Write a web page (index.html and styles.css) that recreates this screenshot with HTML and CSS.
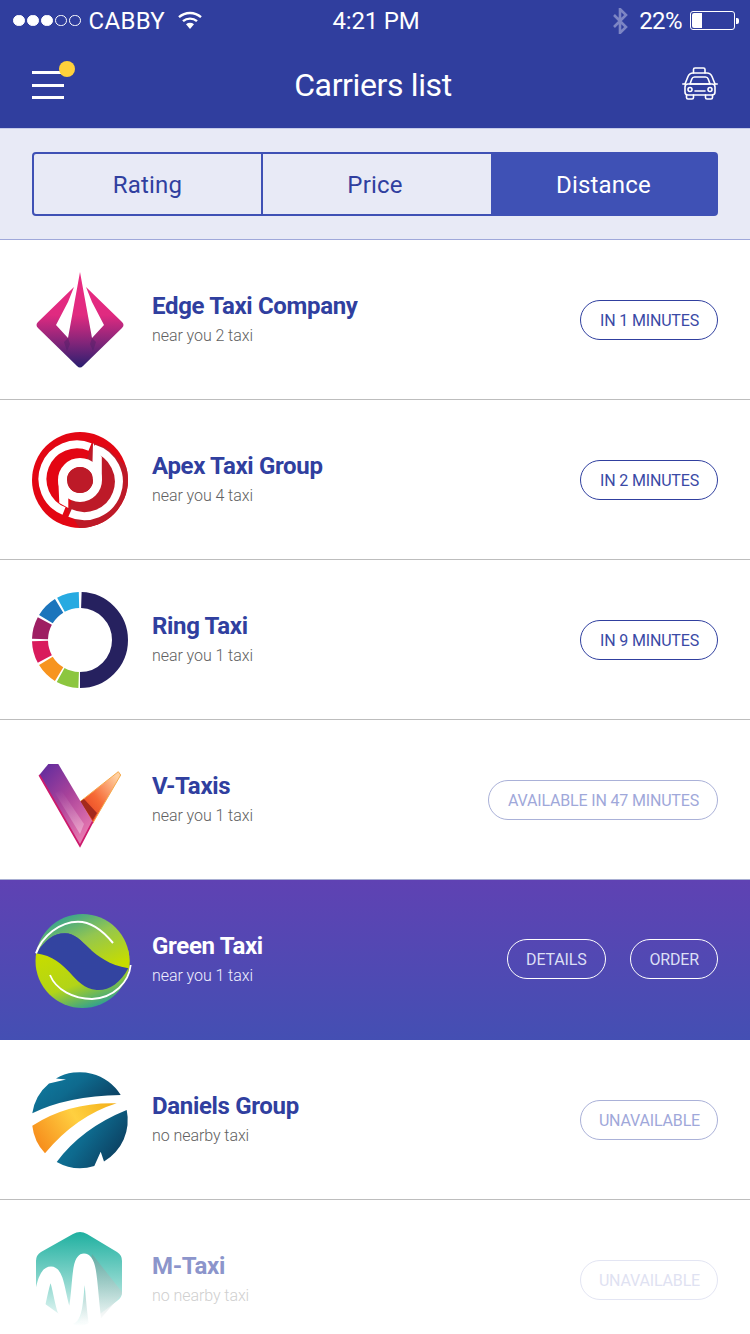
FILE: index.html
```html
<!DOCTYPE html>
<html lang="en">
<head>
<meta charset="utf-8">
<title>Carriers list</title>
<link rel="stylesheet" href="styles.css">
</head>
<body>
<div class="screen">
  <header class="header">
    <div class="status">
      <div class="status-left">
        <div class="dots"><i class="dot on"></i><i class="dot on"></i><i class="dot on"></i><i class="dot"></i><i class="dot"></i></div>
        <span class="carrier">CABBY</span>
        <svg class="wifi" viewBox="0 0 24 18" width="24" height="18"><g fill="none" stroke="#fff" stroke-width="2.4"><path d="M1 6.2C7.2.6 16.8.6 23 6.2"/><path d="M5 10.2c4-3.5 10-3.5 14 0"/></g><path d="M8 13.2c2.400-1.800 5.600-1.800 8 0L12 18z" fill="#fff"/></svg>
      </div>
      <span class="time">4:21 PM</span>
      <div class="status-right">
        <svg class="bt" viewBox="0 0 16 26" width="16" height="26"><path d="M2 7l12 12-6 6V1l6 6L2 19" fill="none" stroke="#7d86c4" stroke-width="2.600"/></svg>
        <span class="pct">22%</span>
        <div class="battery"><div class="battery-level"></div></div>
        <div class="battery-tip"></div>
      </div>
    </div>
    <div class="nav">
      <button class="menu" aria-label="Menu"><i></i><i></i><i></i><b class="badge"></b></button>
      <h1 class="title">Carriers list</h1>
      <svg class="taxi" viewBox="0 0 36 33" width="36" height="33"><g fill="none" stroke="#fff" stroke-width="1.600" stroke-linejoin="round" stroke-linecap="round"><path d="M11.500 6V2.500q0-1.500 1.500-1.500h8.500q1.500 0 1.500 1.500V6"/><path d="M3 17l3-7.500Q7.500 6 11 6h14q3.500 0 5 3.500l3 7.500"/><path d="M8 17l1.800-5q.7-2 2.700-2h11q2 0 2.700 2l1.800 5z"/><rect x="3" y="17" width="30" height="11" rx="3"/><circle cx="8" cy="22.500" r="2"/><circle cx="28" cy="22.500" r="2"/><path d="M13 24h10"/><path d="M.8 17H3M33 17h2.200"/><path d="M4.500 28v2.500q0 1.500 1.500 1.500h4q1.500 0 1.500-1.500V28M23.500 28v2.500q0 1.500 1.500 1.500h4q1.500 0 1.500-1.500V28"/></g></svg>
    </div>
  </header>

  <section class="tabs-bar">
    <div class="tabs">
      <div class="tab">Rating</div>
      <div class="tab tab-mid">Price</div>
      <div class="tab active">Distance</div>
    </div>
  </section>

  <main class="list">
    <article class="row">
      <svg class="logo" viewBox="0 0 96 96" width="96" height="96">
        <defs><linearGradient id="g1" x1="0" y1="0" x2="0" y2="1"><stop offset="0" stop-color="#ea2a80"/><stop offset=".45" stop-color="#e02a80"/><stop offset=".75" stop-color="#7f2579"/><stop offset="1" stop-color="#2a1f70"/></linearGradient></defs>
        <path d="M48 0 36 66 24 53 36 30 42 15 6 50Q3 53 6 56L45 94Q48 97 51 94L90 56Q93 53 90 50L54 15 60 30 72 53 60 66z" fill="url(#g1)"/>
        <path d="M32 70 36 66 38 72 35 79zM64 70 60 66 58 72 61 79z" fill="#4d1f66" opacity=".45"/>
      </svg>
      <div class="info"><h2 class="name">Edge Taxi Company</h2><p class="sub">near you 2 taxi</p></div>
      <div class="actions"><span class="pill">IN 1 MINUTES</span></div>
    </article>

    <article class="row">
      <svg class="logo" viewBox="0 0 96 96" width="96" height="96">
        <defs><clipPath id="c2"><circle cx="48" cy="48" r="48"/></clipPath></defs>
        <circle cx="48" cy="48" r="48" fill="#e30613"/>
        <path d="M61 11 75 16 100 40V100H50L36 78z" fill="#bd1a28" clip-path="url(#c2)"/>
        <g fill="none" stroke="#fff" stroke-width="8">
          <path d="M58 15A34.500 34.500 0 0 0 32 79"/>
          <path d="M62 16.500A34.500 34.500 0 1 1 38 81"/>
          <circle cx="48" cy="48" r="17.500" stroke-width="9"/>
        </g>
        <path d="M61 11 69.800 25V48H60zM26.300 48H36.300V76L27.300 71z" fill="#fff"/>
        <circle cx="48" cy="48" r="13" fill="#bd1a28"/>
      </svg>
      <div class="info"><h2 class="name">Apex Taxi Group</h2><p class="sub">near you 4 taxi</p></div>
      <div class="actions"><span class="pill">IN 2 MINUTES</span></div>
    </article>

    <article class="row">
      <svg class="logo" viewBox="0 0 96 96" width="96" height="96">
        <g fill="none" stroke-width="16">
          <circle cx="48" cy="48" r="40" pathLength="360" stroke="#26215f" stroke-dasharray="178 182" stroke-dashoffset="-272"/>
          <circle cx="48" cy="48" r="40" pathLength="360" stroke="#8cc63f" stroke-dasharray="27 333" stroke-dashoffset="-92"/>
          <circle cx="48" cy="48" r="40" pathLength="360" stroke="#f7941e" stroke-dasharray="27 333" stroke-dashoffset="-121.500"/>
          <circle cx="48" cy="48" r="40" pathLength="360" stroke="#d91b5c" stroke-dasharray="27 333" stroke-dashoffset="-151.500"/>
          <circle cx="48" cy="48" r="40" pathLength="360" stroke="#9e1f63" stroke-dasharray="27 333" stroke-dashoffset="-181.500"/>
          <circle cx="48" cy="48" r="40" pathLength="360" stroke="#1c75bc" stroke-dasharray="27 333" stroke-dashoffset="-211.500"/>
          <circle cx="48" cy="48" r="40" pathLength="360" stroke="#27aae1" stroke-dasharray="27 333" stroke-dashoffset="-241.500"/>
        </g>
      </svg>
      <div class="info"><h2 class="name">Ring Taxi</h2><p class="sub">near you 1 taxi</p></div>
      <div class="actions"><span class="pill">IN 9 MINUTES</span></div>
    </article>

    <article class="row row-above-selected">
      <svg class="logo" viewBox="0 0 96 96" width="96" height="96">
        <defs>
          <linearGradient id="g4a" x1="0" y1="0" x2=".7" y2="1"><stop offset="0" stop-color="#5b2a9e"/><stop offset=".5" stop-color="#a8429a"/><stop offset="1" stop-color="#e878b0"/></linearGradient>
          <linearGradient id="g4b" x1="0" y1="1" x2="1" y2="0"><stop offset="0" stop-color="#e0301c"/><stop offset=".45" stop-color="#f66a35"/><stop offset=".9" stop-color="#ffcfa0"/></linearGradient>
          <linearGradient id="g4c" x1="0" y1="0" x2="0" y2="1"><stop offset="0" stop-color="#fff" stop-opacity="0"/><stop offset="1" stop-color="#fff" stop-opacity=".35"/></linearGradient>
        </defs>
        <path d="M48 49.700 86.300 19.700 88.700 23 60.700 71.300z" fill="url(#g4b)" stroke="#f5a94a" stroke-width="1"/>
        <path d="M48 49.700 60.700 68 65 61 52 47z" fill="#a32a1c"/>
        <path d="M16.300 12H26.300L60.700 69.700 48 94 7.300 23z" fill="url(#g4a)"/>
        <path d="M23 41 29 38 52 72 48 82z" fill="url(#g4c)"/>
        <path d="M7.300 23 48 94 60.700 69.700" fill="none" stroke="#cc1a6c" stroke-width="1.800"/>
      </svg>
      <div class="info"><h2 class="name">V-Taxis</h2><p class="sub">near you 1 taxi</p></div>
      <div class="actions"><span class="pill pill-muted">AVAILABLE IN 47 MINUTES</span></div>
    </article>

    <article class="row row-selected">
      <svg class="logo" viewBox="0 0 96 96" width="96" height="96">
        <defs>
          <linearGradient id="g5a" x1=".2" y1="0" x2=".9" y2=".9"><stop offset="0" stop-color="#1f9aa0"/><stop offset=".5" stop-color="#93c650"/><stop offset="1" stop-color="#c6dc00"/></linearGradient>
          <linearGradient id="g5b" x1=".1" y1=".1" x2=".6" y2="1"><stop offset="0" stop-color="#c6dc00"/><stop offset=".55" stop-color="#b2d418"/><stop offset="1" stop-color="#1f9aa0"/></linearGradient>
          <clipPath id="c5"><circle cx="50.500" cy="49" r="47"/></clipPath>
        </defs>
        <g clip-path="url(#c5)">
          <rect x="0" y="38" width="100" height="62" fill="url(#g5b)"/>
          <path d="M4 41.300C14 28 21 21.300 33 21.300C52 21.300 58 50 96.300 56.300L100 56V0H0V41z" fill="url(#g5a)"/>
          <path d="M4 41.300C14 28 21 21.300 33 21.300C52 21.300 58 50 96.300 56.300C88 72 76 79 64.700 78C40 76 38 46 4 41.300z" fill="#3344a0"/>
        </g>
        <path d="M4 41.300C10 24 28 9.700 46 9.700C60 9.700 72 20 81 31" fill="none" stroke="#fff" stroke-width="2"/>
        <path d="M98.700 53C97 70 82 86 60 87C42 87 24 78 18 63" fill="none" stroke="#fff" stroke-width="1.800"/>
      </svg>
      <div class="info"><h2 class="name">Green Taxi</h2><p class="sub">near you 1 taxi</p></div>
      <div class="actions actions-lift"><span class="pill pill-light pill-details">DETAILS</span><span class="pill pill-light">ORDER</span></div>
    </article>

    <article class="row">
      <svg class="logo" viewBox="0 0 96 96" width="96" height="96">
        <defs>
          <linearGradient id="g6a" x1="0" y1="0" x2="1" y2=".6"><stop offset="0" stop-color="#0f7fa4"/><stop offset=".5" stop-color="#0e6a8e"/><stop offset="1" stop-color="#0c3f60"/></linearGradient>
          <linearGradient id="g6b" x1="0" y1=".6" x2="1" y2=".2"><stop offset="0" stop-color="#f7901e"/><stop offset=".55" stop-color="#ffd040"/><stop offset="1" stop-color="#f5b31d"/></linearGradient>
        </defs>
        <path d="M.3 41.300A48 48 0 0 1 17 11.500L34 7.500 24 6.500A48 48 0 0 1 88.700 23Q35 24 .3 41.300z" fill="url(#g6a)"/>
        <path d="M.3 53.700Q37 30 84.700 31.300 44 44 13 81.300A48 48 0 0 1 .3 53.700z" fill="url(#g6b)"/>
        <path d="M94.700 38A48 48 0 0 1 72 89.500L68.700 79.700 62.300 94A48 48 0 0 1 24.700 89.900Q50 56 94.700 38z" fill="url(#g6a)"/>
      </svg>
      <div class="info"><h2 class="name">Daniels Group</h2><p class="sub">no nearby taxi</p></div>
      <div class="actions"><span class="pill pill-muted pill-tight">UNAVAILABLE</span></div>
    </article>

    <article class="row row-faded">
      <svg class="logo" viewBox="0 0 96 96" width="96" height="96">
        <defs>
          <linearGradient id="g7" x1="0" y1="0" x2="0" y2="1"><stop offset="0" stop-color="#1fb0a0"/><stop offset=".55" stop-color="#8fd8cf"/><stop offset="1" stop-color="#ffffff"/></linearGradient>
          <linearGradient id="g7s" x1="0" y1="0" x2="0" y2="1"><stop offset="0" stop-color="#6f9a96"/><stop offset="1" stop-color="#ffffff"/></linearGradient>
        </defs>
        <path d="M41 2 9 20Q4 23 4 29V60Q4 66 9 69L41 92Q48 96 55 92L85 69Q90 66 90 60V29Q90 23 85 20L55 2Q48-2 41 2z" fill="url(#g7)"/>
        <path d="M60 22 90 60V62L64 92 48 90z" fill="url(#g7s)" opacity=".6"/>
        <path d="M6 76C10 60 12 41 19 41C28 41 28 86 38 86C48 86 44 28 52 28C60 28 59 70 64 96" fill="none" stroke="#fff" stroke-width="13"/>
      </svg>
      <div class="info"><h2 class="name">M-Taxi</h2><p class="sub">no nearby taxi</p></div>
      <div class="actions"><span class="pill pill-tight">UNAVAILABLE</span></div>
    </article>
  </main>
</div>
</body>
</html>
```

FILE: styles.css
```css
* { box-sizing: border-box; margin: 0; padding: 0; }
html, body { width: 750px; height: 1334px; overflow: hidden; background: #fff; }
body { font-family: Roboto, "Liberation Sans", sans-serif; color: #303f9f; }
.screen { width: 750px; height: 1334px; overflow: hidden; }

.header { height: 128px; background: #303e9e; color: #fff; }
.status { height: 40px; display: grid; grid-template-columns: 1fr auto 1fr; align-items: center; padding: 1px 11px 0 13px; font-size: 24px; line-height: 40px; }
.status-left { display: flex; align-items: center; }
.dots { display: flex; gap: 2.500px; margin: -1px 9px 0 0; }
.dot { width: 11.500px; height: 11.500px; border: 1px solid #fff; border-radius: 50%; }
.dot.on { background: #fff; }
.carrier { letter-spacing: .3px; margin-left: -1px; }
.time { letter-spacing: -.2px; }
.wifi { margin-left: 13px; margin-top: -2px; }
.status-right { display: flex; align-items: center; justify-content: flex-end; }
.bt { margin-right: 11px; }
.pct { margin-right: 8px; letter-spacing: -.6px; }
.battery { width: 45px; height: 19px; margin-top: -1px; border: 1px solid #fff; border-radius: 3px; padding: 1px; }
.battery-level { width: 10px; height: 100%; background: #fff; border-radius: 2px 0 0 2px; }
.battery-tip { width: 3px; height: 6px; margin: -1px 0 0 1px; background: #fff; border-radius: 0 2px 2px 0; }

.nav { height: 88px; display: flex; align-items: center; justify-content: space-between; padding: 0 32px; }
.menu { position: relative; width: 32px; height: 28px; margin-top: 2px; display: flex; flex-direction: column; justify-content: space-between; background: none; border: 0; }
.menu i { display: block; height: 3px; background: #fff; }
.badge { position: absolute; left: 27px; top: -10px; width: 16px; height: 16px; border-radius: 50%; background: #ffd13b; }
.title { margin-top: 2px; font-size: 32px; line-height: 40px; font-weight: 400; letter-spacing: -.37px; color: #fff; }
.taxi { display: block; margin-top: -2px; }

.tabs-bar { height: 112px; background: #e8eaf6; border-top: 1px solid #c5cae9; border-bottom: 1px solid #9fa8da; padding-top: 23px; }
.tabs { width: 686px; height: 64px; margin-left: 32px; display: grid; grid-template-columns: 231px 228px 227px; }
.tab { display: flex; align-items: center; justify-content: center; padding-top: 1px; font-size: 24px; letter-spacing: .2px; color: #303f9f; border: 2px solid #3f51b5; border-left-width: 0; }
.tab:first-child { border-left-width: 2px; border-radius: 4px 0 0 4px; }
.tab-mid { padding-right: 4px; border-right-width: 0; }
.tab.active { background: #3f51b5; color: #fff; border-radius: 0 4px 4px 0; }

.list { display: flex; flex-direction: column; }
.row { height: 160px; flex: none; display: flex; align-items: center; padding: 0 32px; border-bottom: 1px solid #bdbdbd; }
.logo { flex: none; display: block; overflow: visible; }
.info { flex: 1; margin-left: 24px; margin-top: -2px; }
.name { font-size: 24px; line-height: 28px; font-weight: 700; letter-spacing: -.33px; color: #303f9f; }
.sub { margin-top: 6px; font-size: 16px; line-height: 20px; font-weight: 300; letter-spacing: -.07px; color: #616161; }
.actions { display: flex; gap: 24px; }
.actions-lift { margin-top: -2px; }
.pill { height: 40px; padding: 1px 18px 0 19px; display: flex; align-items: center; border: 1px solid #303f9f; border-radius: 20px; font-size: 16px; letter-spacing: -.17px; color: #3a4aa6; }
.pill-muted { border-color: #aab1d8; color: #9fa8da; }
.pill-light { border-color: #fff; color: #dcdff5; }
.pill-tight { padding: 1px 17px 0 18px; }
.pill-details { padding-left: 18px; }

.row-above-selected { border-bottom-color: #a8aed2; }
.row-selected { background: linear-gradient(180deg, #5f42b3, #444fb3); border-bottom: 0; }
.row-selected .name { color: #fff; }
.row-selected .sub { color: #f0f0ff; }
.row-faded { border-bottom: 0; }
.row-faded .name { color: #8c95cb; }
.row-faded .sub { color: #cfcfcf; }
.row-faded .pill { border-color: #e3e5f3; color: #dfe2f2; }
```
